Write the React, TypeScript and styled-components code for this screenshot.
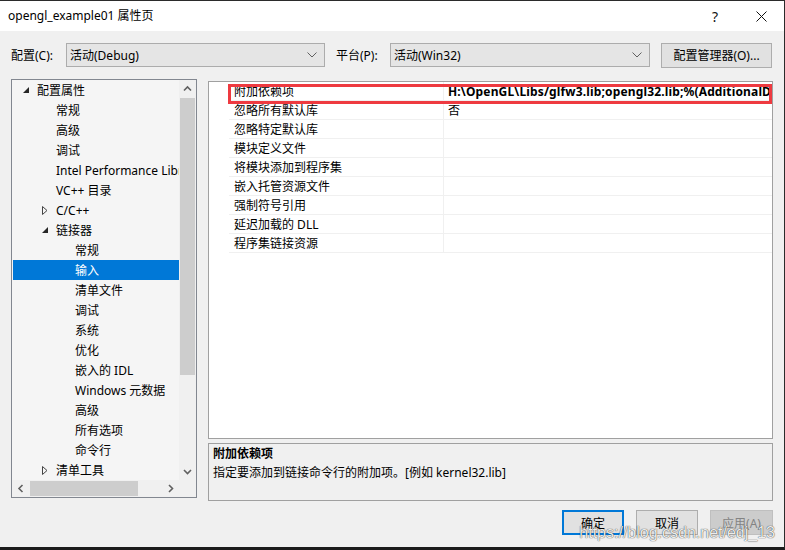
import styled, { createGlobalStyle } from 'styled-components';

const GlobalStyle = createGlobalStyle`
  html, body {
    margin: 0;
    padding: 0;
    background: #f0f0f0;
  }
  body {
    font-family: 'Noto Sans', 'Noto Sans CJK SC', sans-serif;
    font-size: 12px;
    color: #000;
  }
`;

const Window = styled.div`
  position: relative;
  width: 785px;
  height: 550px;
  box-sizing: border-box;
  background: #f0f0f0;
  border-top: 1px solid #2b2b2b;
  border-right: 1px solid #2b2b2b;
  border-bottom: 3px solid #1b1b1b;
  display: flex;
  flex-direction: column;
  overflow: hidden;
`;

const TitleBar = styled.div`
  height: 30px;
  background: #ffffff;
  display: flex;
  align-items: center;
  justify-content: space-between;
  padding-left: 8px;
  flex-shrink: 0;
`;

const TitleText = styled.span`
  font-size: 12px;
  line-height: 30px;
`;

const CaptionButtons = styled.div`
  display: flex;
  height: 30px;
`;

const CaptionButton = styled.div`
  width: 46px;
  height: 30px;
  display: flex;
  align-items: center;
  justify-content: center;
  font-size: 14px;
  color: #111;
`;

const Body = styled.div`
  flex: 1;
  display: flex;
  flex-direction: column;
  padding: 12px 11px 13px 11px;
  min-height: 0;
`;

const ConfigRow = styled.div`
  display: flex;
  align-items: center;
  height: 24px;
`;

const FieldLabel = styled.span<{ $w: number }>`
  width: ${(p) => p.$w}px;
  flex-shrink: 0;
  white-space: nowrap;
`;

const Combo = styled.div<{ $w: number }>`
  width: ${(p) => p.$w}px;
  height: 24px;
  box-sizing: border-box;
  background: #e5e5e5;
  border: 1px solid #acacac;
  display: flex;
  align-items: center;
  justify-content: space-between;
  padding: 0 7px 0 3px;
  margin-right: 11px;
`;

const PushButton = styled.div<{ $w: number; $default?: boolean; $disabled?: boolean }>`
  width: ${(p) => p.$w}px;
  height: 25px;
  box-sizing: border-box;
  display: flex;
  align-items: center;
  justify-content: center;
  white-space: nowrap;
  background: ${(p) => (p.$disabled ? '#cccccc' : '#e1e1e1')};
  color: ${(p) => (p.$disabled ? '#838383' : '#000')};
  border: ${(p) =>
    p.$default ? '2px solid #0078d7' : p.$disabled ? '1px solid #bfbfbf' : '1px solid #adadad'};
`;

const Main = styled.div`
  display: grid;
  grid-template-columns: 186px 1fr;
  column-gap: 11px;
  margin-top: 12px;
  height: 421px;
`;

const TreePanel = styled.div`
  height: 419px;
  box-sizing: border-box;
  border: 1px solid #828790;
  background: #f5f5f5;
  display: grid;
  grid-template-columns: 167px 17px;
  grid-template-rows: 400px 17px;
`;

const TreeList = styled.div`
  overflow: hidden;
`;

const TreeRow = styled.div<{ $level: number; $selected?: boolean }>`
  height: 20px;
  display: flex;
  align-items: center;
  padding-left: ${(p) => 8 + p.$level * 19}px;
  white-space: nowrap;
  background: ${(p) => (p.$selected ? '#0078d7' : 'transparent')};
  color: ${(p) => (p.$selected ? '#ffffff' : '#000')};
  margin-left: 1px;
`;

const Expander = styled.span`
  width: 16px;
  flex-shrink: 0;
  display: flex;
  align-items: center;
  padding-left: 2px;
  box-sizing: border-box;
`;

const VScroll = styled.div`
  background: #f0f0f0;
  display: flex;
  flex-direction: column;
`;

const HScroll = styled.div`
  background: #f0f0f0;
  display: flex;
  align-items: center;
`;

const ScrollCorner = styled.div`
  background: #f0f0f0;
`;

const ScrollArrow = styled.div`
  width: 17px;
  height: 17px;
  display: flex;
  align-items: center;
  justify-content: center;
  flex-shrink: 0;
`;

const VThumb = styled.div`
  margin: 1px 1px 0 1px;
  height: 277px;
  background: #cdcdcd;
`;

const Spacer = styled.div`
  flex: 1;
`;

const HThumb = styled.div`
  width: 108px;
  height: 15px;
  margin-left: 1px;
  background: #cdcdcd;
`;

const RightColumn = styled.div`
  display: flex;
  flex-direction: column;
  gap: 4px;
  margin-top: 2px;
`;

const PropGrid = styled.div`
  position: relative;
  height: 358px;
  box-sizing: border-box;
  border: 1px solid #a0a0a0;
  background: #ffffff;
  overflow: hidden;
`;

const PropRow = styled.div`
  display: grid;
  grid-template-columns: 20px 215px 1fr;
  height: 19px;
`;

const Gutter = styled.div``;

const PropCell = styled.div<{ $value?: boolean; $bold?: boolean }>`
  box-sizing: border-box;
  border-bottom: 1px solid #f0f0f0;
  border-right: ${(p) => (p.$value ? 'none' : '1px solid #f0f0f0')};
  padding-left: ${(p) => (p.$value ? 4 : 5)}px;
  line-height: 20px;
  white-space: nowrap;
  overflow: hidden;
  font-weight: ${(p) => (p.$bold ? 700 : 400)};
  letter-spacing: ${(p) => (p.$bold ? '0.15px' : '0')};
`;

const Highlight = styled.div`
  position: absolute;
  left: 19px;
  top: 2px;
  width: 544px;
  height: 20px;
  box-sizing: border-box;
  border: 3px solid #ee3a40;
  pointer-events: none;
`;

const DescPanel = styled.div`
  height: 58px;
  box-sizing: border-box;
  border: 1px solid #a0a0a0;
  background: #f0f0f0;
  padding: 0 4px;
`;

const DescTitle = styled.div`
  font-weight: 700;
  line-height: 19px;
`;

const DescText = styled.div`
  line-height: 19px;
`;

const Footer = styled.div`
  display: flex;
  justify-content: flex-end;
  gap: 12px;
  margin-top: 10px;
`;

const Watermark = styled.span`
  position: absolute;
  right: 9px;
  bottom: 4px;
  font-family: 'Liberation Sans', Arial, sans-serif;
  font-size: 16px;
  line-height: 20px;
  color: rgba(255, 255, 255, 0.92);
  text-shadow: 0 0 1px rgba(0, 0, 0, 0.75), 0 0 1px rgba(0, 0, 0, 0.4);
  pointer-events: none;
`;

const ChevronDown = () => (
  <svg width="10" height="6" viewBox="0 0 10 6">
    <polyline points="0.5,0.5 5,5 9.5,0.5" fill="none" stroke="#606060" strokeWidth="1" />
  </svg>
);

const ArrowIcon = ({ dir }: { dir: 'up' | 'down' | 'left' | 'right' }) => {
  const pts = {
    up: '1,5.5 4.5,2 8,5.5',
    down: '1,2 4.5,5.5 8,2',
    left: '5.5,1 2,4.5 5.5,8',
    right: '2,1 5.5,4.5 2,8',
  }[dir];
  const vertical = dir === 'up' || dir === 'down';
  return (
    <svg width={vertical ? 9 : 8} height={vertical ? 8 : 9} viewBox={vertical ? '0 0 9 8' : '0 0 8 9'}>
      <polyline points={pts} fill="none" stroke="#606060" strokeWidth="1.6" />
    </svg>
  );
};

const ExpandedGlyph = ({ light }: { light?: boolean }) => (
  <svg width="6" height="6" viewBox="0 0 6 6">
    <polygon points="6,0 6,6 0,6" fill={light ? '#fff' : '#262626'} />
  </svg>
);

const CollapsedGlyph = () => (
  <svg width="6" height="9" viewBox="0 0 6 9">
    <polygon points="0.5,0.5 5,4.5 0.5,8.5" fill="none" stroke="#444" strokeWidth="1" />
  </svg>
);

type TreeItem = {
  label: string;
  level: number;
  state?: 'open' | 'closed';
  selected?: boolean;
};

const treeItems: TreeItem[] = [
  { label: '配置属性', level: 0, state: 'open' },
  { label: '常规', level: 1 },
  { label: '高级', level: 1 },
  { label: '调试', level: 1 },
  { label: 'Intel Performance Libraries', level: 1 },
  { label: 'VC++ 目录', level: 1 },
  { label: 'C/C++', level: 1, state: 'closed' },
  { label: '链接器', level: 1, state: 'open' },
  { label: '常规', level: 2 },
  { label: '输入', level: 2, selected: true },
  { label: '清单文件', level: 2 },
  { label: '调试', level: 2 },
  { label: '系统', level: 2 },
  { label: '优化', level: 2 },
  { label: '嵌入的 IDL', level: 2 },
  { label: 'Windows 元数据', level: 2 },
  { label: '高级', level: 2 },
  { label: '所有选项', level: 2 },
  { label: '命令行', level: 2 },
  { label: '清单工具', level: 1, state: 'closed' },
];

const properties: { name: string; value: string; bold?: boolean }[] = [
  { name: '附加依赖项', value: 'H:\\OpenGL\\Libs/glfw3.lib;opengl32.lib;%(AdditionalDependencies)', bold: true },
  { name: '忽略所有默认库', value: '否' },
  { name: '忽略特定默认库', value: '' },
  { name: '模块定义文件', value: '' },
  { name: '将模块添加到程序集', value: '' },
  { name: '嵌入托管资源文件', value: '' },
  { name: '强制符号引用', value: '' },
  { name: '延迟加载的 DLL', value: '' },
  { name: '程序集链接资源', value: '' },
];

export default function App() {
  return (
    <>
      <GlobalStyle />
      <Window>
        <TitleBar>
          <TitleText>opengl_example01 属性页</TitleText>
          <CaptionButtons>
            <CaptionButton>?</CaptionButton>
            <CaptionButton>
              <svg width="11" height="11" viewBox="0 0 11 11">
                <path d="M0.5 0.5 L10.5 10.5 M10.5 0.5 L0.5 10.5" stroke="#111" strokeWidth="1" />
              </svg>
            </CaptionButton>
          </CaptionButtons>
        </TitleBar>

        <Body>
          <ConfigRow>
            <FieldLabel $w={55}>配置(C):</FieldLabel>
            <Combo $w={259}>
              <span>活动(Debug)</span>
              <ChevronDown />
            </Combo>
            <FieldLabel $w={54}>平台(P):</FieldLabel>
            <Combo $w={260}>
              <span>活动(Win32)</span>
              <ChevronDown />
            </Combo>
            <PushButton $w={111}>配置管理器(O)...</PushButton>
          </ConfigRow>

          <Main>
            <TreePanel>
              <TreeList>
                {treeItems.map((item, i) => (
                  <TreeRow key={i} $level={item.level} $selected={item.selected}>
                    <Expander>
                      {item.state === 'open' && <ExpandedGlyph light={item.selected} />}
                      {item.state === 'closed' && <CollapsedGlyph />}
                    </Expander>
                    {item.label}
                  </TreeRow>
                ))}
              </TreeList>
              <VScroll>
                <ScrollArrow>
                  <ArrowIcon dir="up" />
                </ScrollArrow>
                <VThumb />
                <Spacer />
                <ScrollArrow>
                  <ArrowIcon dir="down" />
                </ScrollArrow>
              </VScroll>
              <HScroll>
                <ScrollArrow>
                  <ArrowIcon dir="left" />
                </ScrollArrow>
                <HThumb />
                <Spacer />
                <ScrollArrow>
                  <ArrowIcon dir="right" />
                </ScrollArrow>
              </HScroll>
              <ScrollCorner />
            </TreePanel>

            <RightColumn>
              <PropGrid>
                {properties.map((p, i) => (
                  <PropRow key={i}>
                    <Gutter />
                    <PropCell>{p.name}</PropCell>
                    <PropCell $value $bold={p.bold}>
                      {p.value}
                    </PropCell>
                  </PropRow>
                ))}
                <Highlight />
              </PropGrid>
              <DescPanel>
                <DescTitle>附加依赖项</DescTitle>
                <DescText>指定要添加到链接命令行的附加项。[例如 kernel32.lib]</DescText>
              </DescPanel>
            </RightColumn>
          </Main>

          <Footer>
            <PushButton $w={62} $default>
              确定
            </PushButton>
            <PushButton $w={62}>取消</PushButton>
            <PushButton $w={63} $disabled>
              应用(A)
            </PushButton>
          </Footer>
        </Body>
        <Watermark>https://blog.csdn.net/edj_13</Watermark>
      </Window>
    </>
  );
}
